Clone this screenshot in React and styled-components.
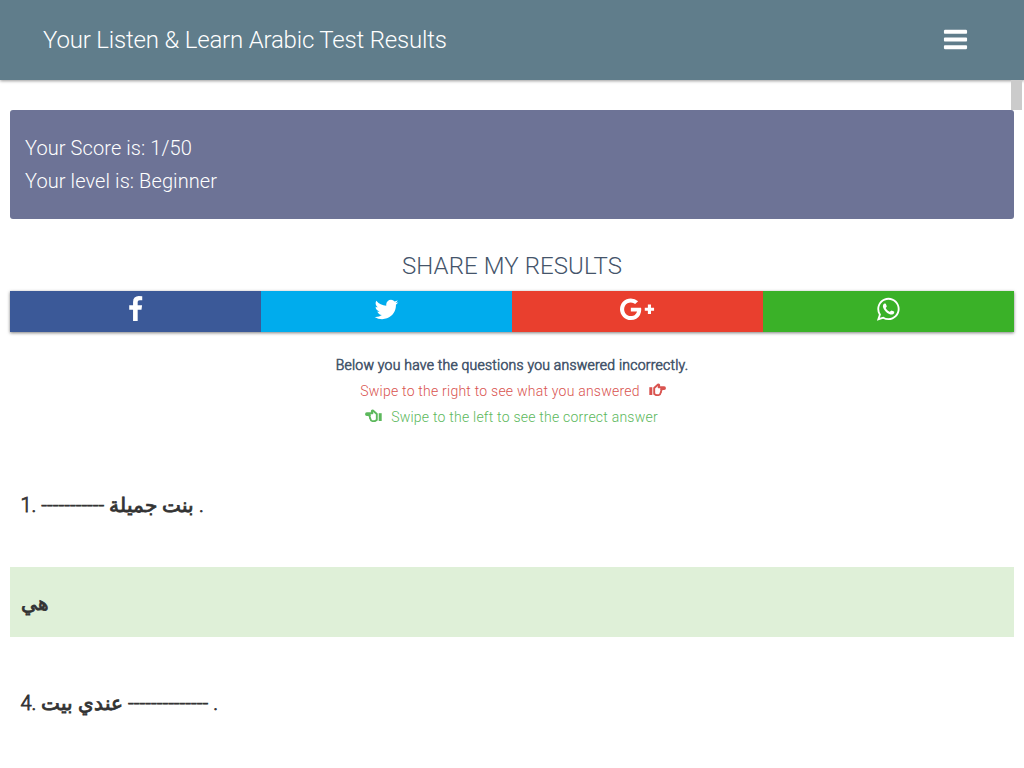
import styled, { createGlobalStyle } from "styled-components";

const icons = {
  bars: {
    width: 1792,
    path: "M1664 1344v128q0 26-19 45t-45 19h-1408q-26 0-45-19t-19-45v-128q0-26 19-45t45-19h1408q26 0 45 19t19 45zm0-512v128q0 26-19 45t-45 19h-1408q-26 0-45-19t-19-45v-128q0-26 19-45t45-19h1408q26 0 45 19t19 45zm0-512v128q0 26-19 45t-45 19h-1408q-26 0-45-19t-19-45v-128q0-26 19-45t45-19h1408q26 0 45 19t19 45z",
  },
  facebook: {
    width: 1792,
    path: "M1343 12v264h-157q-86 0-116 36t-30 108v189h293l-39 296h-254v759h-306v-759h-255v-296h255v-218q0-186 104-288.500t277-102.500q147 0 228 12z",
  },
  twitter: {
    width: 1792,
    path: "M1684 408q-67 98-162 167 1 14 1 42 0 130-38 259.500t-115.500 248.500-184.500 210.500-258 146-323 54.500q-271 0-496-145 35 4 78 4 225 0 401-138-105-2-188-64.500t-114-159.500q33 5 61 5 43 0 85-11-112-23-185.500-111.500t-73.500-205.500v-4q68 38 146 41-66-44-105-115t-39-154q0-88 44-163 121 149 294.500 238.500t371.500 99.500q-8-38-8-74 0-134 94.500-228.500t228.500-94.500q140 0 236 102 109-21 205-78-37 115-142 178 93-10 186-50z",
  },
  google: {
    width: 2304,
    path: "M1437 913q0 208-87 370.500t-248 254-369 91.500q-149 0-285-58t-234-156-156-234-58-285 58-285 156-234 234-156 285-58q286 0 491 192l-199 191q-117-113-292-113-123 0-227.500 62t-165.500 168.500-61 232.500 61 232.500 165.500 168.500 227.500 62q83 0 152.500-23t114.500-57.500 78.500-78.500 49-83 21.500-74h-416v-252h692q12 63 12 122zm867-122v210h-209v209h-210v-209h-209v-210h209v-209h210v209h209z",
  },
  whatsapp: {
    width: 1792,
    path: "M1113 974q13 0 97.500 44t89.500 53q2 5 2 15 0 33-17 76-16 39-71 65.500t-102 26.500q-57 0-190-62-98-45-170-118t-148-185q-72-107-71-194v-8q3-91 74-158 24-22 52-22 6 0 18 1.500t19 1.500q19 0 26.500 6.500t15.500 27.500q8 20 33 88t25 75q0 21-34.500 57.500t-34.500 46.500q0 7 5 15 34 73 102 137 56 53 151 101 12 7 22 7 15 0 54-48.500t52-48.500zm-203 530q127 0 243.500-50t200.500-134 134-200.500 50-243.500-50-243.500-134-200.500-200.500-134-243.500-50-243.500 50-200.500 134-134 200.500-50 243.500q0 203 120 368l-79 233 242-77q158 103 345 103zm0-1382q153 0 292.500 60t240.500 161 161 240.500 60 292.500-60 292.500-161 240.500-240.500 161-292.500 60q-195 0-365-94l-417 134 136-405q-108-178-108-389 0-153 60-292.500t161-240.500 240.500-161 292.500-60z",
  },
};

const networks = [
  { id: "facebook", color: "#3b5998", size: 27 },
  { id: "twitter", color: "#00aced", size: 27 },
  { id: "google", color: "#e93f2e", size: 26.500 },
  { id: "whatsapp", color: "#3ab128", size: 26.500 },
];

function Icon({ variant, size }) {
  const { width, path } = icons[variant];
  return (
    <svg
      width={(size * width) / 1792}
      height={size}
      viewBox={`0 0 ${width} 1792`}
      fill="currentColor"
      aria-hidden="true"
    >
      <path d={path} />
    </svg>
  );
}

function Hand({ left }) {
  return (
    <HandSvg $left={left} viewBox="0 0 17 14" aria-hidden="true">
      <path d="M0.3 4.200h3v7.800h-3z" fill="currentColor" />
      <path
        d="M5.200 5 8.800 1.700q1.300-.6 1.400.7L9.600 4.300h5.500q.9.1.9.9t-.9.9h-3.100q1 1.200 0 2.200.3 1.200-.6 1.900-.1 1.800-1.700 1.900H7.200L5.200 11z"
        fill="none"
        stroke="currentColor"
        strokeWidth="1.9"
        strokeLinejoin="round"
      />
    </HandSvg>
  );
}

export default function App() {
  return (
    <>
      <GlobalStyle />
      <Page>
        <Header>
          <Title>Your Listen &amp; Learn Arabic Test Results</Title>
          <MenuButton aria-label="Menu">
            <Icon variant="bars" size={27} />
          </MenuButton>
        </Header>
        <ScrollThumb />
        <Main>
          <ScoreCard>
            <p>Your Score is: 1/50</p>
            <p>Your level is: Beginner</p>
          </ScoreCard>
          <ShareTitle>SHARE MY RESULTS</ShareTitle>
          <ShareBar>
            {networks.map(({ id, color, size }) => (
              <ShareButton key={id} $color={color} aria-label={id}>
                <Icon variant={id} size={size} />
              </ShareButton>
            ))}
          </ShareBar>
          <Hints>
            <Intro>Below you have the questions you answered incorrectly.</Intro>
            <Hint $color="#d9534f">
              Swipe to the right to see what you answered
              <Hand />
            </Hint>
            <Hint $color="#5cb85c" $left>
              <Hand left />
              Swipe to the left to see the correct answer
            </Hint>
          </Hints>
          <Question>1. ----------- بنت جميلة .</Question>
          <Answer>هي</Answer>
          <Question>4. عندي بيت -------------- .</Question>
        </Main>
      </Page>
    </>
  );
}

const GlobalStyle = createGlobalStyle`
  * {
    box-sizing: border-box;
  }
  body {
    margin: 0;
    overflow: hidden;
    background: #fff;
    font-family: Roboto, "DejaVu Sans", sans-serif;
    font-weight: 300;
  }
  p, h1, h2 {
    margin: 0;
    font-weight: 300;
  }
`;
const HandSvg = styled.svg`
  width: 17px;
  height: 14px;
  margin-top: -2px;
  transform: ${({ $left }) => ($left ? "scaleX(-1)" : "none")};
`;
const Page = styled.div`
  position: relative;
  height: 768px;
  overflow: hidden;
`;
const Header = styled.header`
  display: flex;
  align-items: center;
  justify-content: space-between;
  height: 80px;
  padding: 0 55px 0 43px;
  background: #607d8b;
  color: #fff;
  box-shadow: 0 1px 3px rgba(0, 0, 0, 0.4);
`;
const Title = styled.h1`
  font-size: 24px;
  letter-spacing: -0.18px;
`;
const MenuButton = styled.button`
  display: flex;
  padding: 0 0 1px;
  border: 0;
  background: none;
  color: inherit;
`;
const ScrollThumb = styled.div`
  position: absolute;
  top: 80px;
  right: 2px;
  width: 11px;
  height: 30px;
  background: #cbcbcb;
`;
const Main = styled.main`
  padding: 30px 10px 0;
`;
const ScoreCard = styled.section`
  height: 109px;
  padding: 22px 15px;
  border-radius: 3px;
  background: #6d7396;
  color: #fff;
  font-size: 20px;
  letter-spacing: 0.09px;
  line-height: 33px;
`;
const ShareTitle = styled.h2`
  margin-top: 30px;
  height: 42px;
  color: #44546a;
  font-size: 24px;
  letter-spacing: 0.1px;
  line-height: 34px;
  text-align: center;
`;
const ShareBar = styled.div`
  display: flex;
  height: 41px;
  box-shadow: 0 1px 3px rgba(0, 0, 0, 0.5);
`;
const ShareButton = styled.button`
  display: flex;
  flex: 1;
  align-items: center;
  justify-content: center;
  padding: 0 0 4px;
  border: 0;
  background: ${({ $color }) => $color};
  color: #fff;
`;
const Hints = styled.section`
  margin-top: 20px;
  font-size: 14px;
  letter-spacing: 0.23px;
  line-height: 26px;
  text-align: center;
`;
const Intro = styled.p`
  color: #44546a;
  -webkit-text-stroke: 0.6px #44546a;
`;
const Hint = styled.p`
  display: flex;
  align-items: center;
  justify-content: center;
  gap: 9px;
  padding: ${({ $left }) => ($left ? "0 1px 0 0" : "0 0 0 2px")};
  color: ${({ $color }) => $color};
`;
const Question = styled.div`
  height: 70px;
  margin: 39px 0 28px;
  padding: 1px 10.5px 0;
  color: #333;
  font-size: 20px;
  line-height: 70px;
  -webkit-text-stroke: 0.8px #333;

  & ~ & {
    margin-top: 30px;
  }
`;
const Answer = styled(Question)`
  && {
    margin: 0;
    background: #dff0d8;
  }
`;
